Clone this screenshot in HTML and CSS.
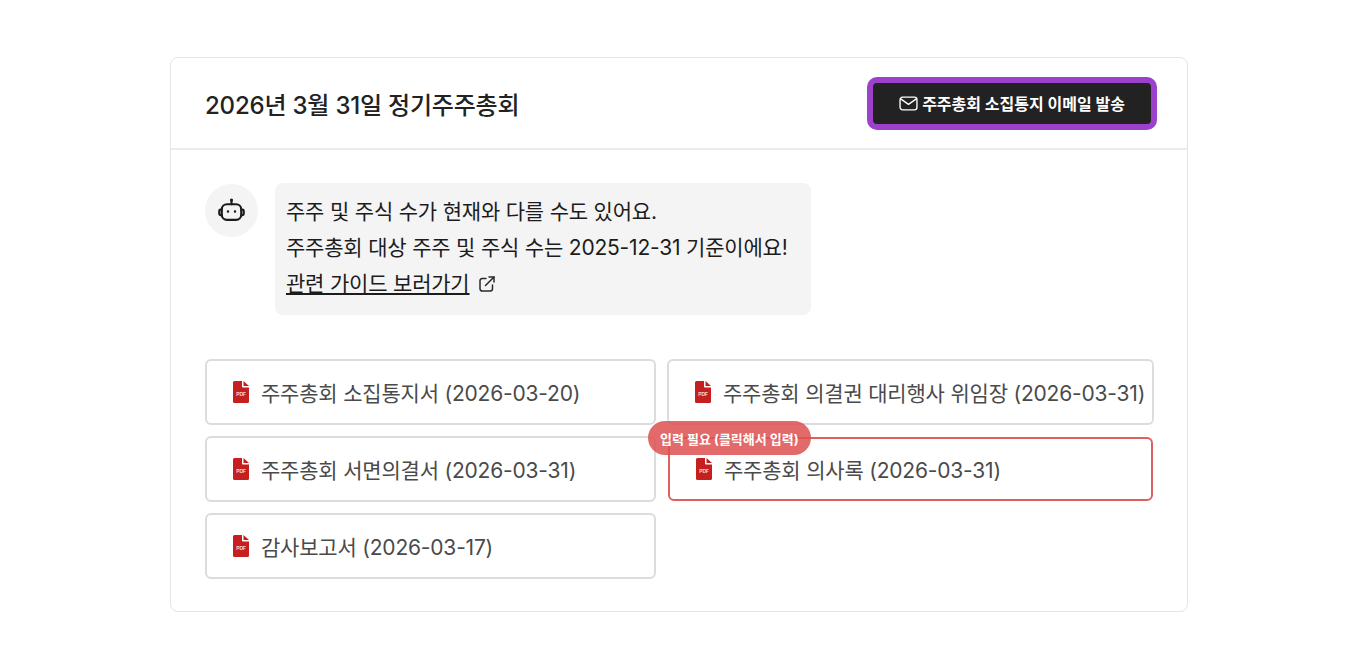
FILE: index.html
```html
<!DOCTYPE html>
<html lang="ko">
<head>
  <meta charset="UTF-8" />
  <title>정기주주총회</title>
  <link rel="stylesheet" href="styles.css">
</head>
<body>

<div class="card">
  <div class="card-header">
    <h2>2026년 3월 31일 정기주주총회</h2>
    <button class="send-btn">
      <svg class="mail-icon" viewBox="0 0 18 18" fill="none" stroke="currentColor" stroke-width="1.3" stroke-linejoin="round" stroke-linecap="round">
        <rect x="1" y="3" width="16" height="12" rx="2.4"/>
        <path d="M1.6 4.6 9 9.8l7.4-5.2"/>
      </svg>
      주주총회 소집통지 이메일 발송
    </button>
  </div>

  <div class="card-body">
    <div class="notice">
      <div class="bot-avatar">
        <svg viewBox="0 0 28 28" fill="none" stroke="#1c1c1c" stroke-width="2.1" stroke-linecap="round" stroke-linejoin="round">
          <rect x="4.6" y="8" width="18.8" height="15" rx="5"/>
          <path d="M14 8V5.2"/>
          <path d="M4.4 13.2H3.4a1.2 1.2 0 0 0-1.2 1.2v2.8a1.2 1.2 0 0 0 1.2 1.2h1"/>
          <path d="M23.6 13.2h1a1.2 1.2 0 0 1 1.2 1.2v2.8a1.2 1.2 0 0 1-1.2 1.2h-1"/>
          <circle cx="14" cy="3.8" r="1" fill="#1c1c1c" stroke-width="1"/>
          <circle cx="10.6" cy="15" r="0.7" fill="#1c1c1c" stroke-width="1"/>
          <circle cx="17.4" cy="15" r="0.7" fill="#1c1c1c" stroke-width="1"/>
        </svg>
      </div>
      <div class="bubble">
        <p>주주 및 주식 수가 현재와 다를 수도 있어요.</p>
        <p>주주총회 대상 주주 및 주식 수는 2025-12-31 기준이에요!</p>
        <p class="guide">
          <a href="#">관련 가이드 보러가기</a>
          <svg class="ext-icon" viewBox="0 0 18 18" fill="none" stroke="#2a2a2a" stroke-width="1.5" stroke-linecap="round" stroke-linejoin="round">
            <path d="M8 3.5H4.2A2.2 2.2 0 0 0 2 5.7v8.1A2.2 2.2 0 0 0 4.2 16h8.1a2.2 2.2 0 0 0 2.2-2.2V10"/>
            <path d="M7.5 10.5 16 2"/>
            <path d="M11 2h5v5"/>
          </svg>
        </p>
      </div>
    </div>

    <div class="doc-grid">
      <div class="doc-item">
        <svg class="pdf-icon" viewBox="0 0 16 22"><path d="M1.5 0H9v5.5a1 1 0 0 0 1 1h6V20.5a1.5 1.5 0 0 1-1.500 1.500h-13A1.500 1.500 0 0 1 0 20.500V1.500A1.500 1.500 0 0 1 1.500 0Z" fill="#c61f1f"/><path d="M10.500 0 16 5h-5.500Z" fill="#c61f1f"/><text x="8" y="14.500" text-anchor="middle" class="pdf-label">PDF</text></svg>
        <span>주주총회 소집통지서 (2026-03-20)</span>
      </div>
      <div class="doc-item">
        <svg class="pdf-icon" viewBox="0 0 16 22"><path d="M1.5 0H9v5.5a1 1 0 0 0 1 1h6V20.5a1.5 1.5 0 0 1-1.500 1.500h-13A1.500 1.500 0 0 1 0 20.500V1.500A1.500 1.500 0 0 1 1.500 0Z" fill="#c61f1f"/><path d="M10.500 0 16 5h-5.500Z" fill="#c61f1f"/><text x="8" y="14.500" text-anchor="middle" class="pdf-label">PDF</text></svg>
        <span>주주총회 의결권 대리행사 위임장 (2026-03-31)</span>
      </div>
      <div class="doc-item">
        <svg class="pdf-icon" viewBox="0 0 16 22"><path d="M1.5 0H9v5.5a1 1 0 0 0 1 1h6V20.5a1.5 1.5 0 0 1-1.500 1.500h-13A1.500 1.500 0 0 1 0 20.500V1.500A1.500 1.500 0 0 1 1.500 0Z" fill="#c61f1f"/><path d="M10.500 0 16 5h-5.500Z" fill="#c61f1f"/><text x="8" y="14.500" text-anchor="middle" class="pdf-label">PDF</text></svg>
        <span>주주총회 서면의결서 (2026-03-31)</span>
      </div>
      <div class="doc-item doc-required">
        <svg class="pdf-icon" viewBox="0 0 16 22"><path d="M1.5 0H9v5.5a1 1 0 0 0 1 1h6V20.5a1.5 1.5 0 0 1-1.500 1.500h-13A1.500 1.500 0 0 1 0 20.500V1.500A1.500 1.500 0 0 1 1.500 0Z" fill="#c61f1f"/><path d="M10.500 0 16 5h-5.500Z" fill="#c61f1f"/><text x="8" y="14.500" text-anchor="middle" class="pdf-label">PDF</text></svg>
        <span>주주총회 의사록 (2026-03-31)</span>
        <div class="badge">입력 필요 (클릭해서 입력)</div>
      </div>
      <div class="doc-item">
        <svg class="pdf-icon" viewBox="0 0 16 22"><path d="M1.5 0H9v5.5a1 1 0 0 0 1 1h6V20.5a1.5 1.5 0 0 1-1.500 1.500h-13A1.500 1.500 0 0 1 0 20.500V1.500A1.500 1.500 0 0 1 1.500 0Z" fill="#c61f1f"/><path d="M10.500 0 16 5h-5.500Z" fill="#c61f1f"/><text x="8" y="14.500" text-anchor="middle" class="pdf-label">PDF</text></svg>
        <span>감사보고서 (2026-03-17)</span>
      </div>
    </div>
  </div>
</div>

</body>
</html>
```

FILE: styles.css
```css
html, body {
  margin: 0;
  height: 100%;
  background-color: #fff;
  color: #1c1c1c;
  font-family: Inter, "Noto Sans CJK KR", sans-serif;
  overflow: hidden;
}

body {
  padding: 57px 172px 0 170px;
  box-sizing: border-box;
}

.card {
  height: 555px;
  border: 1px solid #e4e4e4;
  border-radius: 8px;
  box-sizing: border-box;
}

.card-header {
  height: 92px;
  padding: 0 30px 0 34px;
  display: flex;
  justify-content: space-between;
  align-items: center;
  border-bottom: 2px solid #ebebeb;
  box-sizing: border-box;
}

.card-header h2 {
  margin: 0;
  font-size: 24px;
  font-weight: 500;
  letter-spacing: -0.2px;
  color: #222;
}

.send-btn {
  width: 290px;
  height: 53px;
  padding: 0;
  display: flex;
  justify-content: center;
  align-items: center;
  gap: 4px;
  background-color: #222;
  color: #fff;
  border: 6px solid #9b41cc;
  border-radius: 10px;
  font-family: inherit;
  font-size: 16px;
  font-weight: 700;
}

.mail-icon {
  width: 19px;
  height: 19px;
}

.card-body {
  padding: 33px 34px 0;
}

.notice {
  display: flex;
  gap: 17px;
}

.bot-avatar {
  width: 53px;
  height: 53px;
  margin-top: 1px;
  border-radius: 50%;
  background-color: #f4f4f4;
  display: flex;
  justify-content: center;
  align-items: center;
}

.bot-avatar svg {
  width: 29px;
  height: 29px;
}

.bubble {
  width: 536px;
  height: 132px;
  padding: 11px 11px;
  background-color: #f4f4f4;
  border-radius: 8px;
  box-sizing: border-box;
  font-size: 21px;
  line-height: 36px;
  color: #1c1c1c;
  letter-spacing: -0.2px;
  white-space: nowrap;
}

.bubble p {
  margin: 0;
}

.guide {
  display: flex;
  align-items: center;
  gap: 8px;
}

.guide a {
  color: inherit;
}

.ext-icon {
  width: 18px;
  height: 18px;
}

.doc-grid {
  margin-top: 44px;
  display: grid;
  grid-template-columns: 451px 487px;
  grid-auto-rows: 66px;
  column-gap: 11px;
  row-gap: 11px;
}

.doc-item {
  position: relative;
  display: flex;
  align-items: center;
  gap: 12px;
  padding-left: 26px;
  border: 2px solid #dcdcdc;
  border-radius: 6px;
  box-sizing: border-box;
  font-size: 21px;
  color: #4a4a4a;
  letter-spacing: -0.2px;
  white-space: nowrap;
}

.doc-required {
  margin: 1px;
  border-color: #dc6060;
}

.pdf-icon {
  width: 16px;
  height: 22px;
  flex: none;
}

.pdf-label {
  font-size: 5px;
  font-weight: 700;
  font-family: "Liberation Sans", sans-serif;
  fill: #f6d6d6;
}

.badge {
  position: absolute;
  top: -18px;
  left: -22px;
  height: 34px;
  padding: 0 12px;
  display: flex;
  align-items: center;
  background-color: rgba(222, 80, 80, 0.85);
  color: #fff;
  border-radius: 17px;
  font-size: 13px;
  font-weight: 700;
  letter-spacing: 0;
}
```
